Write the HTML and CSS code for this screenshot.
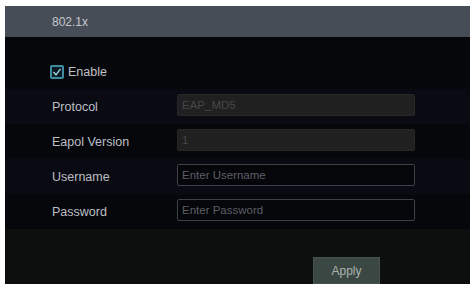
FILE: index.html
```html
<!DOCTYPE html>
<html>
<head>
<meta charset="utf-8">
<link rel="stylesheet" href="styles.css">
</head>
<body>
<div class="frame">
  <div class="panel">
    <div class="header">802.1x</div>
    <div class="form">
      <div class="row row-enable">
        <span class="check">
          <svg width="10" height="10" viewBox="0 0 10 10"><path d="M1.5 5 L4 7.8 L8.5 1.8" fill="none" stroke="#9fd0de" stroke-width="1.4"/></svg>
        </span>
        <span class="check-label">Enable</span>
      </div>
      <div class="row band">
        <span class="label">Protocol</span>
        <div class="input disabled">EAP_MD5</div>
      </div>
      <div class="row">
        <span class="label">Eapol Version</span>
        <div class="input disabled">1</div>
      </div>
      <div class="row band">
        <span class="label">Username</span>
        <div class="input">Enter Username</div>
      </div>
      <div class="row">
        <span class="label">Password</span>
        <div class="input">Enter Password</div>
      </div>
    </div>
    <div class="footer">
      <button class="apply">Apply</button>
    </div>
  </div>
</div>
</body>
</html>
```
FILE: styles.css
```css
html, body {
  margin: 0;
  padding: 0;
  background: #ffffff;
}
body {
  font-family: "Liberation Sans", Arial, sans-serif;
  font-size: 12.5px;
}
.frame {
  width: 476px;
  height: 284px;
  padding: 6px 6px 0 5px;
  box-sizing: border-box;
  overflow: hidden;
}
.panel {
  height: 278px;
  background: #06070b;
  display: flex;
  flex-direction: column;
}
.header {
  height: 31px;
  background: #474d56;
  color: #c3c7ce;
  display: flex;
  align-items: center;
  padding-left: 47px;
  font-size: 12px;
}
.form {
  display: flex;
  flex-direction: column;
  padding-top: 17px;
}
.row {
  height: 35px;
  display: flex;
  align-items: center;
  padding-left: 47px;
}
.band {
  background: #0a0b12;
}
.row-enable {
  padding-left: 45px;
}
.check {
  width: 14px;
  height: 14px;
  box-sizing: border-box;
  border: 2px solid #3f8ca1;
  border-radius: 2px;
  background: #0a1a20;
  display: inline-flex;
  align-items: center;
  justify-content: center;
  margin-right: 4px;
}
.check-label {
  color: #bfc2c7;
}
.label {
  width: 125px;
  color: #bcbfc4;
}
.input {
  width: 238px;
  height: 22px;
  box-sizing: border-box;
  border: 1px solid #3d4046;
  border-radius: 2px;
  background: #05060a;
  color: #5c5f65;
  display: flex;
  align-items: center;
  padding-left: 4px;
  margin-top: -4px;
  font-size: 11.5px;
}
.input.disabled {
  background: #1f201f;
  border-color: #262726;
  color: #45474a;
}
.footer {
  flex: 1;
  background: #0d0e0e;
  display: flex;
  justify-content: flex-end;
  align-items: flex-end;
  padding-right: 90px;
}
.apply {
  width: 67px;
  height: 27px;
  border: 1px solid #46524c;
  background: #3b4742;
  color: #aab4b0;
  font-family: "Liberation Sans", Arial, sans-serif;
  font-size: 12px;
  padding: 0;
}
```
